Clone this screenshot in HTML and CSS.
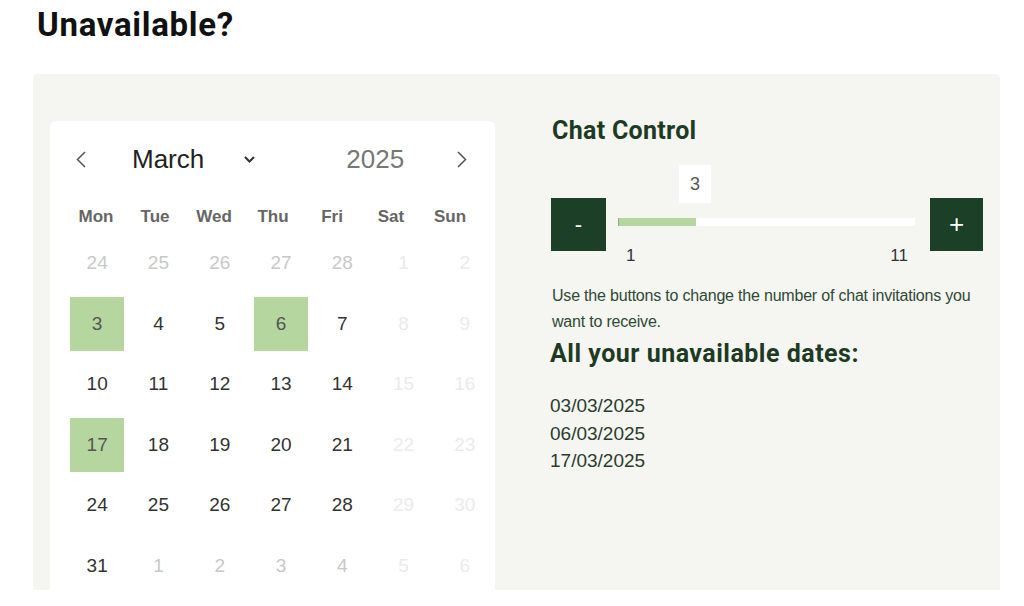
FILE: index.html
```html
<!DOCTYPE html>
<html lang="en">
<head>
    <meta charset="UTF-8">
    <meta name="viewport" content="width=device-width, initial-scale=1.0">
    <title>Unavailable dates</title>
    <link rel="stylesheet" href="styles.css">
</head>
<body>

<div class="page">
    <h1 class="page-title">Unavailable?</h1>

    <div class="panel">
        <!-- Calendar -->
        <div class="calendar">
            <div class="cal-header">
                <span class="cal-nav cal-prev">
                    <svg width="10" height="17" viewBox="0 0 10 17"><path d="M9 1 L1.5 8.5 L9 16" fill="none" stroke="#555" stroke-width="1.5"/></svg>
                </span>
                <span class="cal-month">March</span>
                <span class="cal-caret">
                    <svg width="11" height="7" viewBox="0 0 11 7"><path d="M1 1 L5.5 5.5 L10 1" fill="none" stroke="#333" stroke-width="2"/></svg>
                </span>
                <span class="cal-year">2025</span>
                <span class="cal-nav cal-next">
                    <svg width="10" height="17" viewBox="0 0 10 17"><path d="M1 1 L8.5 8.5 L1 16" fill="none" stroke="#555" stroke-width="1.5"/></svg>
                </span>
            </div>

            <div class="cal-weekdays">
                <span>Mon</span><span>Tue</span><span>Wed</span><span>Thu</span><span>Fri</span><span>Sat</span><span>Sun</span>
            </div>

            <div class="cal-days">
                <span class="day other">24</span><span class="day other">25</span><span class="day other">26</span><span class="day other">27</span><span class="day other">28</span><span class="day off">1</span><span class="day off">2</span>
                <span class="day selected">3</span><span class="day">4</span><span class="day">5</span><span class="day selected">6</span><span class="day">7</span><span class="day off">8</span><span class="day off">9</span>
                <span class="day">10</span><span class="day">11</span><span class="day">12</span><span class="day">13</span><span class="day">14</span><span class="day off">15</span><span class="day off">16</span>
                <span class="day selected">17</span><span class="day">18</span><span class="day">19</span><span class="day">20</span><span class="day">21</span><span class="day off">22</span><span class="day off">23</span>
                <span class="day">24</span><span class="day">25</span><span class="day">26</span><span class="day">27</span><span class="day">28</span><span class="day off">29</span><span class="day off">30</span>
                <span class="day">31</span><span class="day other">1</span><span class="day other">2</span><span class="day other">3</span><span class="day other">4</span><span class="day off">5</span><span class="day off">6</span>
            </div>
        </div>

        <!-- Chat control -->
        <div class="side">
            <h2 class="side-title">Chat Control</h2>

            <div class="stepper">
                <div class="step-btn">-</div>
                <div class="slider">
                    <div class="slider-value">3</div>
                    <div class="slider-track">
                        <div class="slider-fill" style="width: 26%"></div>
                    </div>
                    <div class="slider-labels">
                        <span>1</span>
                        <span>11</span>
                    </div>
                </div>
                <div class="step-btn step-plus">+</div>
            </div>

            <p class="help">Use the buttons to change the number of chat invitations you want to receive.</p>

            <h3 class="side-title dates-title">All your unavailable dates:</h3>
            <ul class="dates">
                <li>03/03/2025</li>
                <li>06/03/2025</li>
                <li>17/03/2025</li>
            </ul>
        </div>
    </div>
</div>

</body>
</html>
```

FILE: styles.css
```css
body {
    margin: 0;
    background-color: #fff;
    font-family: 'Liberation Sans', Arial, sans-serif;
    color: #333;
}

.page {
    padding: 0 24px 0 33px;
}

.page-title {
    margin: 5px 0 0 4px;
    font-family: Roboto, 'DejaVu Sans', sans-serif;
    font-weight: 700;
    font-size: 33px;
    line-height: 40px;
    letter-spacing: 0.7px;
    color: #111;
}

.panel {
    box-sizing: border-box;
    margin-top: 29px;
    height: 516px;
    overflow: hidden;
    background-color: #f5f5f1;
    border-radius: 4px 4px 0 0;
    padding: 47px 17px 0 17px;
    display: grid;
    grid-template-columns: 445px 1fr;
    column-gap: 56px;
    align-items: start;
}

/* Calendar */

.calendar {
    background-color: #fff;
    border-radius: 6px;
    padding: 18px 3px 20px 20px;
}

.cal-header {
    display: flex;
    align-items: center;
    height: 40px;
    padding-left: 6px;
    font-size: 26px;
}

.cal-nav {
    display: flex;
    width: 10px;
}

.cal-month {
    margin-left: 46px;
    color: #222;
}

.cal-caret {
    display: flex;
    margin-left: 40px;
}

.cal-year {
    margin-left: 91px;
    color: #777;
}

.cal-next {
    margin-left: 53px;
}

.cal-weekdays {
    display: grid;
    grid-template-columns: repeat(7, 59px);
    margin: 26px 0 0 -3.5px;
    height: 24px;
    line-height: 24px;
    font-size: 17px;
    font-weight: 700;
    color: #666;
    text-align: center;
}

.cal-days {
    display: grid;
    grid-template-columns: repeat(7, 1fr);
    column-gap: 7px;
    row-gap: 6.5px;
    margin-top: 7px;
}

.day {
    height: 54px;
    line-height: 54px;
    text-align: center;
    font-size: 19px;
    color: #333;
}

.day.other {
    color: #c8c8c8;
}

.day.off {
    color: #ebebeb;
}

.day.selected {
    background-color: #b6d6a0;
    color: #555;
}

/* Side column */

.side {
    margin-top: -5px;
}

.side-title {
    margin: 0 0 0 1px;
    font-family: Roboto, 'DejaVu Sans', sans-serif;
    font-weight: 700;
    font-size: 25px;
    line-height: 30px;
    letter-spacing: 0.3px;
    color: #1d3b23;
}

.stepper {
    display: flex;
    align-items: flex-start;
    margin-top: 52px;
    height: 68px;
}

.step-btn {
    width: 55px;
    height: 53px;
    background-color: #1b3f27;
    color: #fff;
    font-size: 22px;
    line-height: 53px;
    text-align: center;
}

.step-plus {
    width: 53px;
    margin-left: 15px;
    font-size: 26px;
}

.slider {
    position: relative;
    width: 297px;
    margin-left: 12px;
    padding-top: 20px;
}

.slider-value {
    position: absolute;
    top: -33px;
    left: 61px;
    width: 32px;
    height: 38px;
    line-height: 38px;
    background-color: #fff;
    text-align: center;
    font-size: 18px;
    color: #555;
}

.slider-track {
    height: 8px;
    background-color: #fff;
}

.slider-fill {
    height: 100%;
    background-color: #b6d6a0;
    border-left: 1px solid #8fb07a;
}

.slider-labels {
    display: flex;
    justify-content: space-between;
    margin-top: 20px;
    padding: 0 7px 0 8px;
    font-size: 17px;
    line-height: 20px;
    color: #333;
}

.help {
    margin: 17px 0 0 1px;
    font-size: 16px;
    line-height: 26px;
    letter-spacing: -0.2px;
    color: #2f4a35;
}

.dates-title {
    margin: 4px 0 0 -1px;
    letter-spacing: 0.5px;
}

.dates {
    list-style: none;
    margin: 23px 0 0 -1px;
    padding: 0;
    font-size: 19px;
    line-height: 27.5px;
    color: #2a3c2d;
}
```
